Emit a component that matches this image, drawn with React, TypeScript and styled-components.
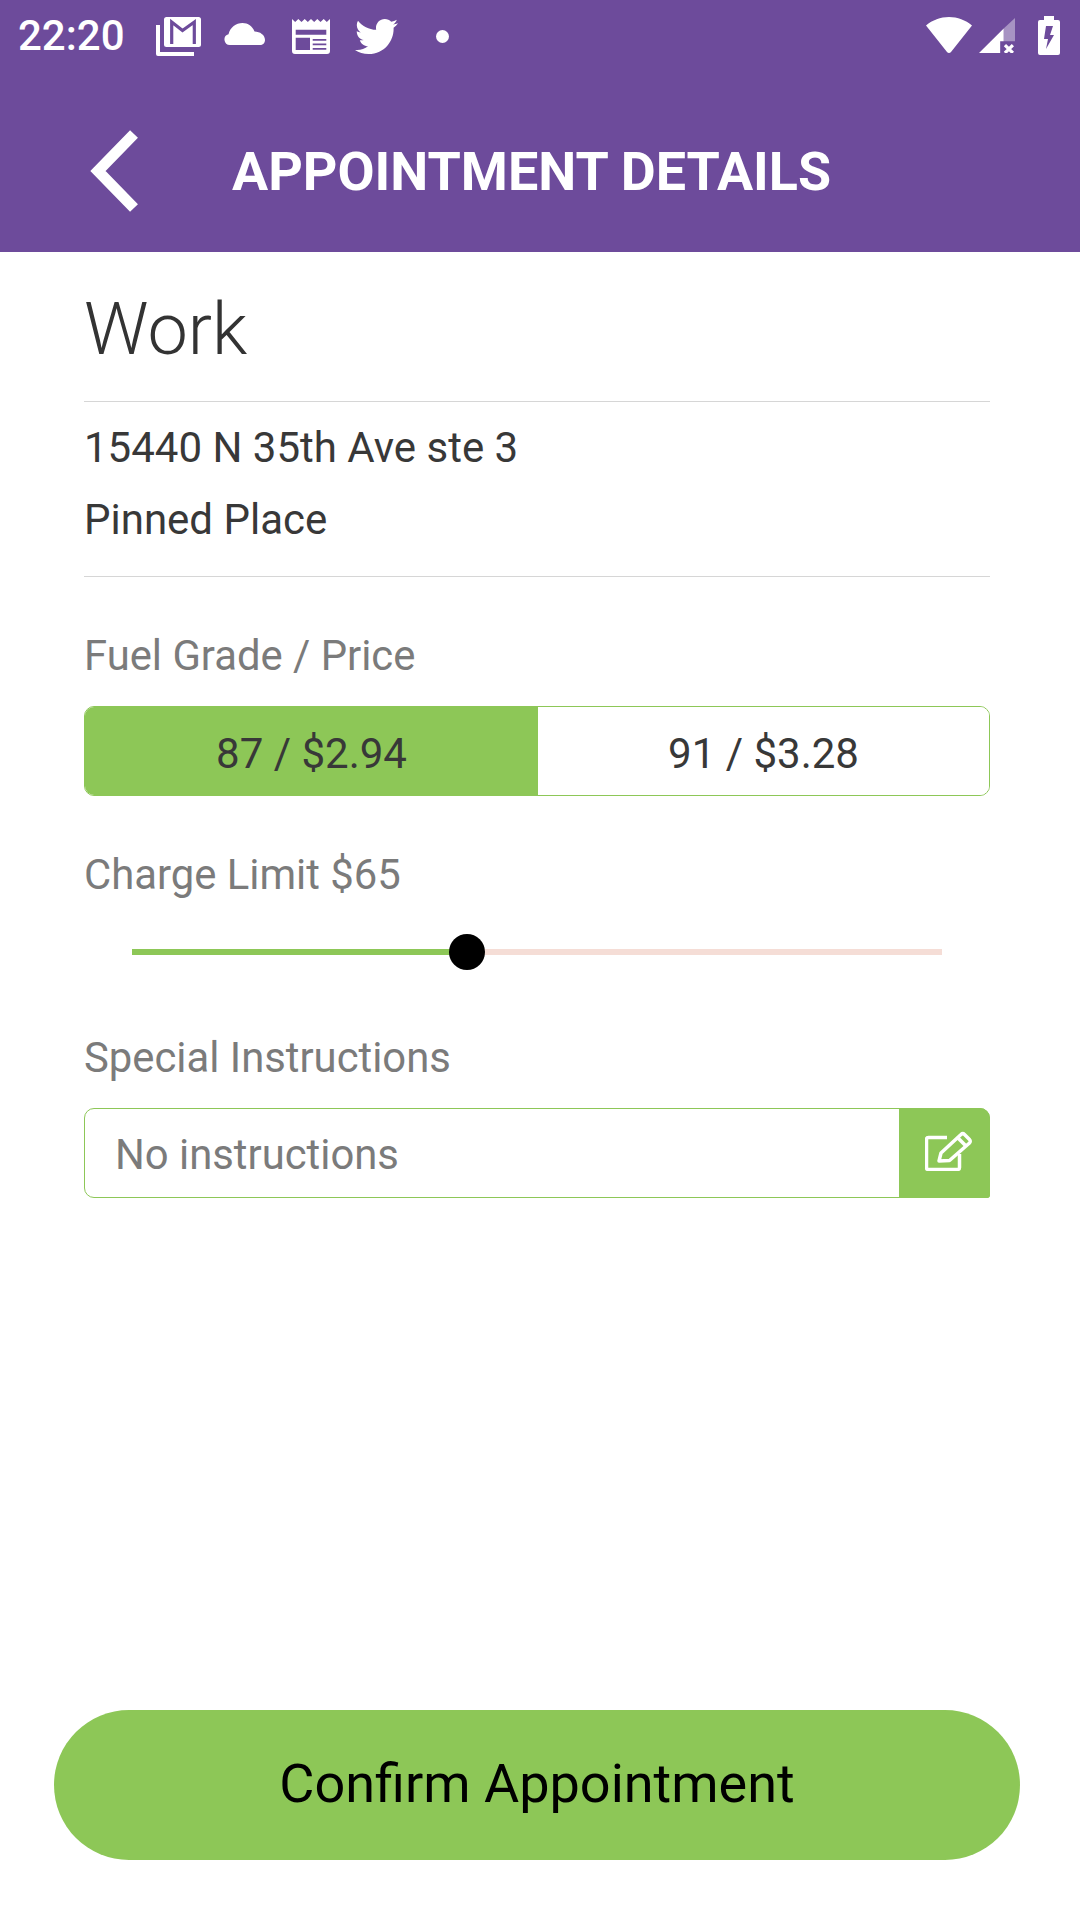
import { FC } from 'react'
import styled, { createGlobalStyle } from 'styled-components'
import { FaTwitter } from 'react-icons/fa'

const GREEN = '#8dc757'
const PURPLE = '#6d4b9b'

const chargePercent = 41.4

const App: FC = () => {
  return (
    <Page>
      <GlobalStyle />
      <Header>
        <StatusBar>
          <StatusLeft>
            <Time>22:20</Time>
            <GmailIcon viewBox="0 0 46 39">
              <path d="M0 8h4v27h34v4H2a2 2 0 0 1-2-2z" />
              <rect x="8" width="37" height="30" rx="2.500" />
              <polyline points="15.700,27 15.700,5 26.500,13.500 38.300,5 38.300,27" fill="none" stroke={PURPLE} strokeWidth="3.200" />
            </GmailIcon>
            <CloudIcon viewBox="0 0 41 22">
              <path d="M6 22a5.500 5.500 0 0 1-1.500-10.800C6 4.500 12 0 18.500 0c5.500 0 10 3.200 12 8.500 5.500 0 10.500 3.500 10.500 8.500 0 3-2.200 5-5 5z" />
            </CloudIcon>
            <NewsIcon viewBox="0 0 38 35">
              <path fillRule="evenodd" d="M0 0l3.200 3L6.300 0l3.200 3 3.200-3 3.100 3L19 0l3.200 3 3.100-3 3.200 3L31.700 0l3.100 3L38 0v32a3 3 0 0 1-3 3H3a3 3 0 0 1-3-3zM3.700 10.700v5h30.600v-5zm0 8V31H18V18.700zm17 1.300v1.700h13.600V20zm0 4.500v1.700h13.600v-1.700zm0 4.500v1.700h13.600V29z" />
            </NewsIcon>
            <BirdIcon />
            <Dot />
          </StatusLeft>
          <StatusRight>
            <WifiIcon viewBox="0 0 46 36">
              <path d="M23 0C14.500 0 6.500 3 0 8.500l21 26.500c1 1.300 3 1.300 4 0L46 8.500C39.500 3 31.500 0 23 0z" />
            </WifiIcon>
            <SignalIcon viewBox="0 0 34 33">
              <path d="M34 0v22H23.300V10z" fillOpacity="0.4" />
              <path d="M0 33L23.300 10v12H20v11z" />
              <path d="M24.500 25.500l7.500 7.500M32 25.500L24.500 33" fill="none" stroke="#fff" strokeWidth="3" />
            </SignalIcon>
            <BatteryIcon viewBox="0 0 22 39">
              <path fillRule="evenodd" d="M6 0h10v4h4a2 2 0 0 1 2 2v31a2 2 0 0 1-2 2H2a2 2 0 0 1-2-2V6a2 2 0 0 1 2-2h4zm2 10l-2 13h4l-2 10 8-14h-4l3-9z" />
            </BatteryIcon>
          </StatusRight>
        </StatusBar>
        <TitleBar>
          <BackIcon viewBox="0 0 50 84">
            <polyline points="44,5 8,42 44,79" />
          </BackIcon>
          <Title>APPOINTMENT DETAILS</Title>
        </TitleBar>
      </Header>

      <Content>
        <Name>Work</Name>
        <Address>
          <AddressLine>15440 N 35th Ave ste 3</AddressLine>
          <AddressLine>Pinned Place</AddressLine>
        </Address>

        <FirstLabel>Fuel Grade / Price</FirstLabel>
        <Segments>
          <Segment $active>87 / $2.94</Segment>
          <Segment>91 / $3.28</Segment>
        </Segments>

        <ChargeLabel>Charge Limit $65</ChargeLabel>
        <SliderRow>
          <Track>
            <Fill style={{ width: `${chargePercent}%` }} />
            <Thumb style={{ left: `${chargePercent}%` }} />
          </Track>
        </SliderRow>

        <SpecialLabel>Special Instructions</SpecialLabel>
        <InstructionBox>
          <InstructionText>No instructions</InstructionText>
          <EditButton>
            <EditIcon viewBox="0 0 48 40">
              <path d="M22 6.500H3.500a2 2 0 0 0-2 2v28a2 2 0 0 0 2 2h29a2 2 0 0 0 2-2V23" />
              <path d="M14 30l2-8L36 3.500c1-1 2.500-1 3.500 0l5 5c1 1 1 2.500 0 3.500L24.500 29.500z" />
              <path d="M33 7l8 8" />
            </EditIcon>
          </EditButton>
        </InstructionBox>
      </Content>

      <Footer>
        <ConfirmButton>Confirm Appointment</ConfirmButton>
      </Footer>
    </Page>
  )
}

const GlobalStyle = createGlobalStyle`
  html, body {
    margin: 0;
    padding: 0;
    background: #fff;
  }
  * {
    box-sizing: border-box;
  }
`

const Page = styled.div`
  width: 1080px;
  height: 1920px;
  display: flex;
  flex-direction: column;
  background: #fff;
  font-family: Roboto, "Liberation Sans", sans-serif;
  overflow: hidden;
`

const Header = styled.header`
  height: 252px;
  background: ${PURPLE};
  color: #fff;
  display: flex;
  flex-direction: column;
`

const StatusBar = styled.div`
  height: 72px;
  display: flex;
  align-items: center;
  justify-content: space-between;
  padding: 0 20px 0 18px;
`

const StatusLeft = styled.div`
  display: flex;
  align-items: center;
`

const StatusRight = styled.div`
  display: flex;
  align-items: center;
  padding-bottom: 2px;
`

const Time = styled.span`
  font-size: 42px;
  font-weight: 500;
  line-height: 72px;
  width: 138px;
`

const GmailIcon = styled.svg`
  width: 46px;
  height: 39px;
  fill: #fff;
  margin-right: 22px;
`

const CloudIcon = styled.svg`
  width: 41px;
  height: 22px;
  fill: #fff;
  margin: 0 27px 4px 0;
`

const NewsIcon = styled.svg`
  width: 38px;
  height: 35px;
  fill: #fff;
  margin-right: 25px;
`

const BirdIcon = styled(FaTwitter)`
  width: 43px;
  height: 43px;
  margin-right: 38px;
`

const Dot = styled.span`
  width: 13px;
  height: 13px;
  border-radius: 50%;
  background: #fff;
`

const WifiIcon = styled.svg`
  width: 46px;
  height: 36px;
  fill: #fff;
  margin-right: 7px;
`

const SignalIcon = styled.svg`
  width: 36px;
  height: 35px;
  fill: #fff;
  margin-right: 23px;
`

const BatteryIcon = styled.svg`
  width: 22px;
  height: 39px;
  fill: #fff;
`

const TitleBar = styled.div`
  flex: 1;
  display: flex;
  align-items: center;
  padding: 20px 0 0 90px;
`

const BackIcon = styled.svg`
  width: 50px;
  height: 84px;
  margin-top: -2px;
  fill: none;
  stroke: #fff;
  stroke-width: 11;
  margin-right: 92px;
`

const Title = styled.h1`
  margin: 0;
  font-size: 53.8px;
  font-weight: 700;
  line-height: 60px;
`

const Content = styled.main`
  padding: 0 90px 0 84px;
  display: flex;
  flex-direction: column;
`

const Name = styled.div`
  height: 150px;
  padding-top: 6px;
  display: flex;
  align-items: center;
  font-size: 72px;
  font-weight: 300;
  color: #333;
  border-bottom: 1px solid #d6d6d6;
`

const Address = styled.div`
  padding: 10px 0 20px;
  border-bottom: 1px solid #d6d6d6;
`

const AddressLine = styled.div`
  font-size: 42px;
  line-height: 72px;
  color: #383838;
`

const FieldLabel = styled.div`
  font-size: 41.8px;
  line-height: 50px;
  color: #7b7b7b;
`

const FirstLabel = styled(FieldLabel)`
  margin-top: 54px;
`

const ChargeLabel = styled(FieldLabel)`
  margin-top: 54px;
`

const SpecialLabel = styled(FieldLabel)`
  margin-top: 63px;
`

const Segments = styled.div`
  margin-top: 25px;
  height: 90px;
  display: flex;
  border: 1px solid ${GREEN};
  border-radius: 10px;
  overflow: hidden;
`

const Segment = styled.div<{ $active?: boolean }>`
  flex: ${(p) => (p.$active ? '0 0 453px' : '1')};
  display: flex;
  align-items: center;
  justify-content: center;
  padding-top: 4px;
  font-size: 42px;
  color: #383838;
  background: ${(p) => (p.$active ? GREEN : '#fff')};
`

const SliderRow = styled.div`
  margin-top: 34px;
  height: 36px;
  padding: 0 48px;
  display: flex;
  align-items: center;
`

const Track = styled.div`
  position: relative;
  flex: 1;
  height: 6px;
  background: #f5ddd6;
`

const Fill = styled.div`
  height: 100%;
  background: ${GREEN};
`

const Thumb = styled.div`
  position: absolute;
  top: 50%;
  width: 36px;
  height: 36px;
  border-radius: 50%;
  background: #000;
  transform: translate(-50%, -50%);
`

const InstructionBox = styled.div`
  margin-top: 25px;
  height: 90px;
  display: flex;
  border: 1px solid ${GREEN};
  border-radius: 10px 10px 3px 10px;
`

const InstructionText = styled.div`
  flex: 1;
  display: flex;
  align-items: center;
  padding: 3px 0 0 30px;
  font-size: 41.8px;
  color: #7b7b7b;
`

const EditButton = styled.div`
  width: 91px;
  margin: -1px -1px -1px 0;
  padding: 0 0 4px 8px;
  display: flex;
  align-items: center;
  justify-content: center;
  background: ${GREEN};
  border-radius: 0 10px 3px 0;
`

const EditIcon = styled.svg`
  width: 48px;
  height: 40px;
  fill: none;
  stroke: #fff;
  stroke-width: 3.5;
  stroke-linejoin: round;
`

const Footer = styled.footer`
  margin-top: auto;
  padding: 0 60px 60px 54px;
`

const ConfirmButton = styled.div`
  height: 150px;
  padding-bottom: 4px;
  border-radius: 75px;
  background: ${GREEN};
  display: flex;
  align-items: center;
  justify-content: center;
  font-size: 54px;
  color: #000;
`

export default App
